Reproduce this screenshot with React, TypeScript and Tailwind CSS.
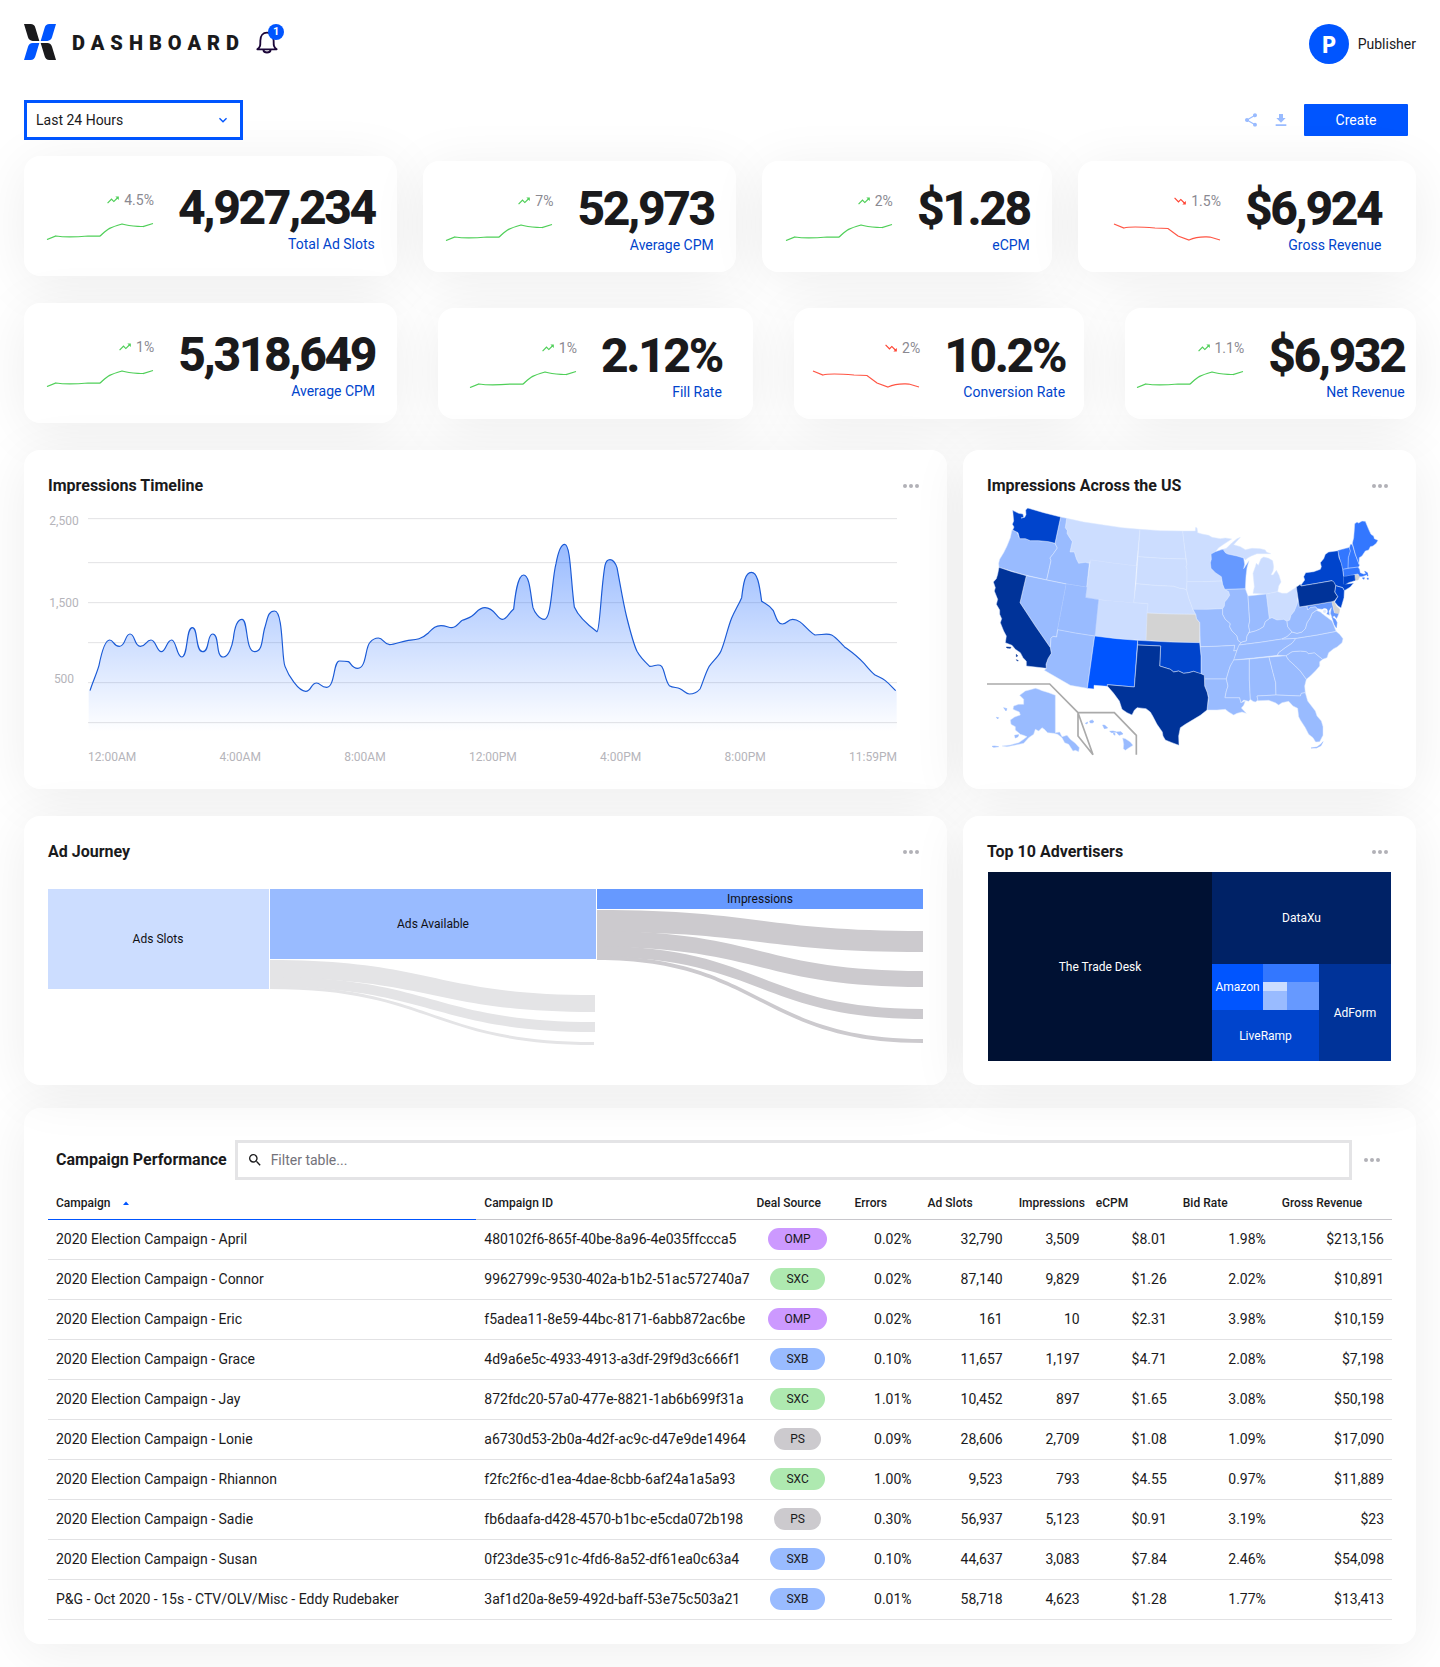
import type { ReactNode } from "react";
import { MdKeyboardArrowDown, MdSearch, MdShare, MdTrendingDown, MdTrendingUp } from "react-icons/md";

type Kpi = { value: string; label: string; change: string; down?: boolean; large?: boolean };

const topKpis: Kpi[] = [
  { value: "4,927,234", label: "Total Ad Slots", change: "4.5%", large: true },
  { value: "52,973", label: "Average CPM", change: "7%" },
  { value: "$1.28", label: "eCPM", change: "2%" },
  { value: "$6,924", label: "Gross Revenue", change: "1.5%", down: true },
];

const bottomKpis: Kpi[] = [
  { value: "5,318,649", label: "Average CPM", change: "1%", large: true },
  { value: "2.12%", label: "Fill Rate", change: "1%" },
  { value: "10.2%", label: "Conversion Rate", change: "2%", down: true },
  { value: "$6,932", label: "Net Revenue", change: "1.1%" },
];

const columns = [
  { name: "Campaign", width: "w-[428px]" },
  { name: "Campaign ID", width: "w-[272px]" },
  { name: "Deal Source", width: "w-[98px]" },
  { name: "Errors", width: "w-[73px]" },
  { name: "Ad Slots", width: "w-[91px]" },
  { name: "Impressions", width: "w-[77px]" },
  { name: "eCPM", width: "w-[87px]" },
  { name: "Bid Rate", width: "w-[99px]" },
  { name: "Gross Revenue", width: "w-[118px]" },
];

const campaigns = [
  ["2020 Election Campaign - April", "480102f6-865f-40be-8a96-4e035ffccca5", "OMP", "0.02%", "32,790", "3,509", "$8.01", "1.98%", "$213,156"],
  ["2020 Election Campaign - Connor", "9962799c-9530-402a-b1b2-51ac572740a7", "SXC", "0.02%", "87,140", "9,829", "$1.26", "2.02%", "$10,891"],
  ["2020 Election Campaign - Eric", "f5adea11-8e59-44bc-8171-6abb872ac6be", "OMP", "0.02%", "161", "10", "$2.31", "3.98%", "$10,159"],
  ["2020 Election Campaign - Grace", "4d9a6e5c-4933-4913-a3df-29f9d3c666f1", "SXB", "0.10%", "11,657", "1,197", "$4.71", "2.08%", "$7,198"],
  ["2020 Election Campaign - Jay", "872fdc20-57a0-477e-8821-1ab6b699f31a", "SXC", "1.01%", "10,452", "897", "$1.65", "3.08%", "$50,198"],
  ["2020 Election Campaign - Lonie", "a6730d53-2b0a-4d2f-ac9c-d47e9de14964", "PS", "0.09%", "28,606", "2,709", "$1.08", "1.09%", "$17,090"],
  ["2020 Election Campaign - Rhiannon", "f2fc2f6c-d1ea-4dae-8cbb-6af24a1a5a93", "SXC", "1.00%", "9,523", "793", "$4.55", "0.97%", "$11,889"],
  ["2020 Election Campaign - Sadie", "fb6daafa-d428-4570-b1bc-e5cda072b198", "PS", "0.30%", "56,937", "5,123", "$0.91", "3.19%", "$23"],
  ["2020 Election Campaign - Susan", "0f23de35-c91c-4fd6-8a52-df61ea0c63a4", "SXB", "0.10%", "44,637", "3,083", "$7.84", "2.46%", "$54,098"],
  ["P&G - Oct 2020 - 15s - CTV/OLV/Misc - Eddy Rudebaker", "3af1d20a-8e59-492d-baff-53e75c503a21", "SXB", "0.01%", "58,718", "4,623", "$1.28", "1.77%", "$13,413"],
];

const badgeColors: Record<string, string> = {
  OMP: "bg-[#cc99ff]",
  SXC: "bg-[#aee9b0]",
  SXB: "bg-[#99bbff]",
  PS: "bg-[#cccace]",
};

const shadow = "rounded-2xl bg-white shadow-[0_8px_56px_rgba(0,0,0,0.07)]";

function Logo() {
  return (
    <svg viewBox="72 72 96 108" className="h-9 w-8" aria-hidden="true">
      <path fill="#1a1a1c" d="M72 72H92Q103 72 106 83L118 123H98Q87 122 84 112Z" />
      <path fill="#0055ff" d="M168 72H148Q137 72 134 83L122 123H142Q153 122 156 112Z" />
      <path fill="#0055ff" d="M72 180H92Q103 180 106 169L118 129H98Q87 130 84 140Z" />
      <path fill="#1a1a1c" d="M168 180H148Q137 180 134 169L122 129H142Q153 130 156 140Z" />
    </svg>
  );
}

function Bell() {
  return (
    <button type="button" aria-label="Notifications, 1 new" className="relative ml-[11px] flex h-9 w-7 items-start pt-[7px]">
      <svg viewBox="768 92 66 69" className="h-[23px] w-[22px]" fill="none" stroke="#1b0638" strokeWidth="5.5">
        <path strokeLinejoin="round" d="M772 147C782 140 781 133 781 121C781 106 789 97 801 97C813 97 821 106 821 121C821 133 820 140 830 147Z" />
        <path d="M790 149C792 159 810 159 812 149" />
      </svg>
      <span className="absolute top-0 left-3 flex size-4 items-center justify-center rounded-full bg-[#0055ff] text-[11px] font-bold text-white">
        1
      </span>
    </button>
  );
}

function MoreButton({ label }: { label: string }) {
  return (
    <button type="button" aria-label={label} className="flex h-6 w-6 items-center justify-center">
      <svg viewBox="0 0 16 4" className="h-1 w-4" fill="#b2b1b7">
        <circle cx="2" cy="2" r="2" />
        <circle cx="8" cy="2" r="2" />
        <circle cx="14" cy="2" r="2" />
      </svg>
    </button>
  );
}

function Panel({ title, children }: { title: string; children: ReactNode }) {
  return (
    <section className={`${shadow} p-6`}>
      <header className="flex items-center justify-between">
        <h2 className="text-base leading-6 font-bold">{title}</h2>
        <MoreButton label={`${title} options`} />
      </header>
      {children}
    </section>
  );
}

function KpiCard({ value, label, change, down, large }: Kpi) {
  const Trend = down ? MdTrendingDown : MdTrendingUp;
  return (
    <article className={`flex items-start justify-center gap-6 ${shadow} ${large ? "pt-[26px] pb-[22px]" : "pt-[22px] pb-[17px]"}`}>
      <div className="mt-2 flex flex-col items-end gap-3">
        <p className="flex items-center gap-1 text-sm leading-5 text-[#8a8991]">
          <Trend className={`size-[14px] ${down ? "text-[#ff4433]" : "text-[#4fcf58]"}`} aria-hidden="true" />
          {change}
        </p>
        <svg
          viewBox="0 0 108 18"
          className={`h-[18px] w-[108px] ${down ? "text-[#ff5544]" : "text-[#4fcf58]"}`}
          fill="none"
          stroke="currentColor"
          strokeWidth="1.25"
          aria-hidden="true"
        >
          {down ? (
            <path d="M1 1L11 5C18 3 30 4 42 5L55 5.500L65 13L76 17C85 13 90 14 97 14L107 17" />
          ) : (
            <path d="M1 17.500L10 14C20 15.500 30 15 42 14L54 14C62 7 62 6 76 2C84 4.500 90 4 97 4.500L107 1.500" />
          )}
        </svg>
      </div>
      <div className="flex flex-col items-end">
        <strong className="text-5xl leading-[52px] font-extrabold tracking-tighter">{value}</strong>
        <span className="text-sm leading-5 text-[#0044cc]">{label}</span>
      </div>
    </article>
  );
}

const curve =
  "C278 755 290 730 297 705C304 670 315 629 329 629C341 629 340 648 358 648C378 648 374 611 390 611C406 611 402 648 421 648C438 648 438 629 453 629C468 629 470 664 484 664C498 664 500 629 515 629C529 629 530 680 545 680C565 680 557 592 577 592C595 592 585 664 608 664C630 664 620 611 638 611C660 611 645 680 670 680C685 680 696 650 700 625C705 580 715 567 726 567C745 567 735 664 764 664C790 664 785 620 795 590C803 565 803 542 824 542C850 542 845 690 855 708C865 735 895 783 917 783C935 783 932 758 950 758C962 758 962 771 980 771C1005 771 1000 692 1018 692C1028 692 1036 692 1045 694C1053 697 1055 714 1073 714C1100 714 1095 650 1110 636C1116 629 1122 623 1135 623C1150 623 1152 643 1169 643C1185 643 1200 634 1225 630C1245 628 1262 629 1285 608C1300 593 1306 586 1323 586C1340 586 1343 592 1356 592C1370 592 1378 575 1387 570C1396 566 1406 564 1415 558C1430 548 1435 532 1455 532C1485 532 1490 567 1508 567C1520 567 1525 550 1541 536C1545 500 1552 434 1571 434C1590 434 1592 500 1599 532C1603 545 1618 567 1633 567C1655 567 1655 450 1668 400C1675 362 1685 342 1694 342C1712 342 1712 450 1723 530C1735 558 1765 585 1791 604C1800 600 1803 470 1815 405C1818 392 1825 388 1830 388C1838 388 1845 395 1851 412C1862 470 1870 520 1880 560C1890 600 1900 640 1911 663C1920 680 1935 695 1949 708C1965 708 1975 698 1985 708C1995 722 1995 750 2008 766C2020 773 2030 770 2040 775C2055 783 2058 791 2068 791C2080 791 2090 788 2100 776C2108 760 2115 730 2127 709C2140 690 2155 680 2163 662C2175 635 2182 595 2195 563C2205 540 2215 525 2225 502C2230 460 2235 426 2254 426C2272 426 2278 460 2285 513C2300 523 2310 525 2320 541C2328 560 2332 581 2347 581C2362 581 2362 567 2378 567C2405 567 2420 600 2445 614C2465 614 2480 608 2495 614C2510 622 2520 637 2533 649C2555 665 2570 675 2590 697C2600 708 2610 722 2624 733C2635 740 2645 742 2655 750C2668 760 2676 770 2687 781";

function Timeline() {
  return (
    <div className="mt-[15px] flex pr-[26px] text-xs leading-4 text-[#b5b4ba]">
      <div className="w-10 shrink-0">
        <div className="w-8 text-center">
          <p>2,500</p>
          <p className="mt-[66px]">1,500</p>
          <p className="mt-[60px]">500</p>
        </div>
      </div>
      <div className="mt-[5px] grow">
        <svg
          viewBox="264 263 2427 642"
          preserveAspectRatio="none"
          className="h-[214px] w-full"
          role="img"
          aria-label="Impressions over the day"
        >
          <defs>
            <linearGradient id="area" x1="0" y1="342" x2="0" y2="905" gradientUnits="userSpaceOnUse">
              <stop offset="0" stopColor="#0055ff" stopOpacity="0.4" />
              <stop offset="1" stopColor="#0055ff" stopOpacity="0" />
            </linearGradient>
          </defs>
          <path stroke="#e2e2e4" strokeWidth="3" d="M264 265H2691M264 397H2691M264 517H2691M264 637H2691M264 757H2691M264 877H2691" />
          <path fill="url(#area)" d={`M266 905V781H270${curve}H2690V905Z`} />
          <path fill="none" stroke="#1a5ad6" strokeWidth="3.500" d={`M270 781${curve}`} />
        </svg>
        <div className="mt-[17px] flex justify-between">
          {["12:00AM", "4:00AM", "8:00AM", "12:00PM", "4:00PM", "8:00PM", "11:59PM"].map((time) => (
            <span key={time}>{time}</span>
          ))}
        </div>
      </div>
    </div>
  );
}

const stateShapes: { fill: string; shapes: string[] }[] = [
  {
    fill: "#ccddff",
    shapes: [
      "289,87 340,98 400,107 455,115 509,120 498,230 430,222 361,212 357,222 345,219 325,222 318,208 312,188 299,188 306,157 296,142 290,132 291,124 285,115",
      "361,212 430,222 498,230 490,340 420,334 345,325",
      "384,331 460,338 533,343 527,453 450,448 373,440",
      "509,120 570,124 637,125 640,150 643,175 647,209 575,207 503,202",
      "503,202 575,207 647,209 650,225 647,232 650,240 650,277 649,302 640,298 628,297 610,291 550,288 497,283",
      "497,283 550,288 610,291 628,297 640,298 649,302 655,325 661,342 668,362 676,375 600,374 530,371 533,343 490,340",
      "637,125 675,125 676,114 680,116 682,130 695,134 715,138 725,144 750,148 765,146 784,149 760,165 745,175 735,187 723,194 722,210 720,220 722,237 735,250 753,262 754,275 700,277 650,277 650,240 647,232 650,225 643,175 640,150",
      "650,277 700,277 754,275 757,285 763,300 775,307 778,318 770,330 763,338 762,350 758,358 710,360 668,362 661,342 655,325 649,302",
      "750,182 768,177 785,160 800,148 810,144 800,155 790,166 810,172 825,181 845,177 870,178 885,182 888,188 901,193 875,193 860,193 843,200 832,206 825,212 820,205 800,200 772,194",
      "848,312 852,292 850,272 848,252 855,232 858,222 864,228 872,208 880,203 895,207 907,214 910,232 908,245 902,256 908,257 918,243 926,258 932,278 925,290 922,307 888,314",
      "888,314 922,307 935,312 950,312 965,302 979,293 982,320 980,345 972,365 962,378 958,392 950,396 940,390 920,392 905,385 897,388",
    ],
  },
  {
    fill: "#99bbff",
    shapes: [
      "125,122 140,128 148,148 165,148 180,154 205,154 235,157 254,162 261,176 250,192 239,206 242,214 229,272 160,256 86,234 85,222 88,210 100,190 110,170 120,145",
      "271,83 289,87 285,115 291,124 290,132 296,142 306,157 299,188 312,188 318,208 325,222 345,219 357,222 349,294 288,284 229,272 242,214 239,206 250,192 261,176 254,162",
      "168,259 229,272 288,284 262,421 259,443 248,441 242,447 240,475 195,410 149,340",
      "288,284 349,294 345,325 384,331 373,440 315,431 262,421",
      "262,421 315,431 373,440 351,597 300,588 222,543 228,537 227,525 233,508 243,492 240,475 242,447 248,441 259,443",
      "668,360 710,360 757,358 757,375 765,390 780,403 778,412 785,425 800,440 803,453 812,460 808,466 800,483 790,485 793,468 740,471 690,472 688,400 678,388 676,375",
      "690,472 740,471 793,468 790,485 800,483 791,512 780,530 775,545 768,569 703,569 700,557 692,553 692,500",
      "703,569 768,569 773,590 768,605 764,625 808,625 812,640 825,635 820,648 813,656 828,672 815,668 800,672 790,677 775,668 765,660 740,662 710,662 715,625 711,610 703,590",
      "763,300 825,298 833,320 838,395 835,410 838,425 830,440 828,455 818,457 812,460 803,453 800,440 785,425 778,412 780,403 765,390 757,375 757,358 762,350 763,338 770,330 778,318 775,307",
      "833,320 888,314 897,388 885,397 880,412 867,420 855,425 836,430 838,425 835,410 838,395",
      "828,455 830,440 836,430 855,425 867,420 880,412 885,397 897,388 905,385 920,392 940,390 950,396 952,412 965,428 950,442 935,449 870,459 806,467 812,460 818,457",
      "806,467 870,459 935,449 977,447 965,462 945,475 925,490 921,498 850,506 790,512 800,483",
      "790,512 837,509 837,570 840,630 835,636 820,632 812,640 808,625 764,625 768,605 773,590 768,569 775,545 780,530",
      "837,509 896,503 908,550 916,580 917,617 860,620 863,632 855,638 848,636 840,630 837,570",
      "896,503 947,499 955,512 975,530 990,545 1008,570 1003,590 1005,610 993,612 990,620 917,617 916,580 908,550",
      "860,620 917,617 990,620 993,612 1005,610 1012,635 1035,665 1040,680 1053,695 1058,712 1058,738 1048,757 1036,758 1028,745 1015,735 1005,715 990,692 985,682 982,657 968,650 955,636 935,640 925,647 915,640 895,633 863,634",
      "947,499 965,487 990,485 1008,487 1015,493 1032,490 1057,510 1048,517 1048,530 1035,545 1020,560 1008,570 990,545 975,530 955,512",
      "921,498 925,490 945,475 965,462 977,447 1040,437 1097,426 1108,435 1118,448 1115,460 1100,473 1090,478 1075,490 1070,505 1057,510 1032,490 1015,493 1008,487 990,485 965,487 947,499",
      "935,449 950,442 965,428 980,432 995,428 1005,418 1010,400 1020,385 1025,372 1038,363 1050,368 1062,378 1072,385 1085,395 1092,412 1097,426 1040,437 977,447",
      "958,392 962,378 972,365 980,345 984,330 987,353 1010,350 1012,362 1020,354 1035,352 1042,360 1038,363 1025,372 1020,385 1010,400 1005,418 995,428 980,432 965,428 952,412 950,396",
      "195,597 205,600 215,604 235,610 255,618 255,730 268,728 275,742 290,738 300,750 315,762 327,775 325,787 315,783 308,785 295,765 283,760 275,745 262,735 250,732 232,730 222,720 215,715 205,725 195,720 190,735 175,745 160,762 140,766 110,772 95,770 120,767 145,760 160,750 170,742 160,738 150,735 135,722 135,712 122,705 120,692 133,683 150,677 147,668 128,660 130,650 145,645 160,645 160,630 148,618 165,605 180,601",
      "100,655 110,658 107,665", "78,684 85,685 82,689", "133,738 145,736 143,742 135,746", "65,771 72,770 85,772 70,774",
      "345,702 352,698 350,704", "358,695 366,692 371,697 366,701 359,700", "397,707 404,708 412,716 402,718", "418,726 428,725 438,728 424,730", "428,733 434,732 434,738", "438,728 452,727 458,734 446,738",
      "457,746 465,748 480,758 488,768 475,776 465,783 459,778 460,765",
      "1022,776 1040,773 1052,764 1058,757 1052,769 1038,776",
    ],
  },
  {
    fill: "#6699ff",
    shapes: [
      "722,194 735,187 750,182 758,180 765,190 772,194 800,200 820,206 823,225 820,238 832,220 836,214 830,235 827,260 825,298 763,300 757,285 753,262 735,250 722,237 720,220 723,210",
      "1010,350 1050,343 1085,337 1092,370 1106,372 1102,382 1098,388 1092,380 1085,385 1080,372 1083,355 1076,365 1078,378 1068,374 1055,360 1042,358 1035,352 1020,354 1012,362",
      "1085,383 1095,390 1100,400 1098,415 1092,405",
    ],
  },
  { fill: "#d3d3d3", shapes: ["530,371 600,374 676,375 678,388 688,400 688,460 600,458 527,453", "1085,337 1090,335 1098,350 1108,360 1106,372 1094,371", "1152,258 1163,254 1168,262 1163,272 1154,273"] },
  {
    fill: "#3377ff",
    shapes: [
      "1103,184 1137,175 1140,185 1134,205 1133,237 1117,240",
      "1137,175 1140,165 1146,165 1155,195 1163,215 1168,228 1163,235 1133,237 1134,205 1140,185",
      "1146,162 1150,145 1152,120 1153,103 1160,98 1165,101 1175,95 1185,96 1195,120 1202,135 1210,140 1212,148 1223,153 1218,162 1208,170 1200,172 1195,182 1185,185 1175,200 1167,205 1166,225 1155,195",
      "1117,240 1133,237 1163,233 1168,240 1170,250 1180,254 1190,252 1188,258 1175,262 1168,262 1163,254 1120,262",
      "1183,246 1191,250 1193,260 1190,258", "1176,266 1182,265 1181,270", "1190,267 1194,266 1193,271",
    ],
  },
  { fill: "#0055ff", shapes: ["373,440 440,448 502,453 492,593 411,586 412,591 371,588 371,599 351,597"] },
  {
    fill: "#0044cc",
    shapes: [
      "127,63 145,72 158,74 160,84 152,86 163,84 167,76 166,62 172,56 220,70 271,83 254,162 235,157 205,154 180,154 165,148 148,148 143,130 127,122 131,113 126,105 130,95",
      "502,453 600,458 688,460 692,500 692,555 670,546 655,550 640,552 625,545 610,548 600,540 568,530 571,470 502,467",
      "992,287 1003,272 1000,262 1006,250 1030,247 1050,240 1053,232 1050,220 1060,208 1065,195 1075,188 1103,184 1106,205 1113,222 1117,240 1120,262 1121,285 1135,283 1150,281 1140,293 1122,304 1117,295 1096,289 1085,274 1040,282 992,290",
      "1096,289 1117,295 1122,304 1121,325 1112,356 1103,350 1093,338 1102,322 1093,308",
      "1120,262 1152,257 1154,273 1135,279 1121,288",
    ],
  },
  {
    fill: "#003399",
    shapes: [
      "86,234 125,247 168,259 149,340 195,410 240,475 243,492 233,508 227,525 228,537 168,530 168,516 158,505 150,490 135,480 125,468 105,460 108,440 100,425 90,400 94,388 88,375 88,362 78,345 82,330 72,305 75,295 69,278 78,268 82,255",
      "502,467 571,470 568,530 600,540 610,548 625,545 640,552 655,550 670,546 692,553 702,558 703,590 711,610 714,625 710,662 690,678 670,690 645,705 630,715 625,740 626,768 605,760 585,752 578,740 576,728 560,705 547,680 540,668 527,658 500,655 492,663 485,677 470,670 455,660 447,635 430,612 411,590 411,586 492,593",
      "978,293 990,285 992,290 1040,282 1085,274 1091,278 1096,289 1093,308 1102,322 1093,334 1085,337 1050,343 987,353",
      "108,473 122,474 120,477 110,476", "138,495 142,500 138,502", "138,511 144,514 141,515",
    ],
  },
];

function UsMap() {
  return (
    <svg viewBox="50 50 1215 756" className="mt-2 h-auto w-full" role="img" aria-label="Map of impressions by state">
      {stateShapes.map(({ fill, shapes }) => (
        <g key={fill} fill={fill} stroke="#dde8ff" strokeWidth="1.500" strokeLinejoin="round">
          {shapes.map((points) => (
            <polygon key={points} points={points} stroke={points.length < 60 ? fill : undefined} />
          ))}
        </g>
      ))}
      <circle cx="1063" cy="366" r="7" fill="#dde8ff" stroke="#ffffff" strokeWidth="4" />
      <path fill="none" stroke="#aaaaaa" strokeWidth="5" d="M50 584H238L323 670H432L498 738V796M323 670V740L368 796Z" />
    </svg>
  );
}

function flow(x1: number, x2: number, top: number, bottom: number, endTop: number, endBottom: number) {
  const mid = (x1 + x2) / 2;
  return `M${x1} ${top}C${mid} ${top} ${mid} ${endTop} ${x2} ${endTop}V${endBottom}C${mid} ${endBottom} ${mid} ${bottom} ${x1} ${bottom}Z`;
}

function Journey() {
  return (
    <svg viewBox="0 0 875 160" className="mt-[25px] h-auto w-full text-xs" role="img" aria-label="Ad journey from slots to impressions">
      <g fill="#e4e4e6">
        <path d={flow(222, 547, 71, 89, 106, 123)} />
        <path d={flow(222, 547, 88, 98, 133, 143)} />
        <path d={flow(222, 546, 97, 100, 153, 156)} />
      </g>
      <g fill="#cccace">
        <path d={flow(549, 875, 21, 43, 42, 63)} />
        <path d={flow(549, 875, 42, 58, 82, 98)} />
        <path d={flow(549, 875, 57, 68, 120, 130)} />
        <path d={flow(549, 875, 67, 71, 150, 154)} />
      </g>
      <rect width="221" height="100" fill="#ccddff" />
      <rect x="222" width="326" height="70" fill="#99bbff" />
      <rect x="549" width="326" height="20" fill="#6699ff" />
      <g fill="#101014" textAnchor="middle">
        <text x="110" y="54">Ads Slots</text>
        <text x="385" y="39">Ads Available</text>
        <text x="712" y="14">Impressions</text>
      </g>
    </svg>
  );
}

function Treemap() {
  const cell = "flex items-center justify-center";
  return (
    <div className="mt-2 grid h-[189px] w-full grid-cols-[224fr_179fr] pr-px pl-px text-xs text-white">
      <div className={`${cell} bg-[#001133]`}>The Trade Desk</div>
      <div className="grid grid-rows-[92fr_97fr]">
        <div className={`${cell} bg-[#002266]`}>DataXu</div>
        <div className="grid grid-cols-[107fr_72fr]">
          <div className="grid grid-rows-[46fr_51fr]">
            <div className="grid grid-cols-[51fr_56fr]">
              <div className={`${cell} bg-[#0055ff]`}>Amazon</div>
              <div className="grid grid-rows-[18fr_28fr]">
                <div className="bg-[#3377ff]" />
                <div className="grid grid-cols-[24fr_32fr]">
                  <div className="grid grid-rows-[9fr_19fr]">
                    <div className="bg-[#ccddff]" />
                    <div className="bg-[#99bbff]" />
                  </div>
                  <div className="bg-[#6699ff]" />
                </div>
              </div>
            </div>
            <div className={`${cell} bg-[#0044cc]`}>LiveRamp</div>
          </div>
          <div className={`${cell} bg-[#003399]`}>AdForm</div>
        </div>
      </div>
    </div>
  );
}

function CampaignTable() {
  return (
    <table className="mt-2 w-full table-fixed border-collapse text-sm leading-5">
      <thead>
        <tr className="h-[31px] border-b border-[#c8c7cc] text-left text-xs">
          {columns.map(({ name, width }, i) => (
            <th
              key={name}
              scope="col"
              aria-sort={i === 0 ? "ascending" : undefined}
              className={`${width} px-2 font-medium whitespace-nowrap ${i === 0 ? "border-b border-[#0055ff]" : ""}`}
            >
              {i === 0 ? (
                <button type="button" className="flex items-center gap-3">
                  {name}
                  <svg viewBox="0 0 6 4" className="h-1 w-[6px]" fill="#0055ff" aria-hidden="true">
                    <path d="M3 0.500L6 4H0Z" />
                  </svg>
                </button>
              ) : (
                name
              )}
            </th>
          ))}
        </tr>
      </thead>
      <tbody>
        {campaigns.map((row) => (
          <tr key={row[1]} className="h-10 border-b border-[#e2e2e4]">
            {row.map((cell, i) => (
              <td key={columns[i].name} className={`px-2 whitespace-nowrap ${i > 2 ? "text-right" : i === 2 ? "text-center" : ""}`}>
                {i === 2 ? (
                  <span className={`inline-block rounded-full px-4 align-middle text-xs leading-[22px] ${badgeColors[cell]}`}>{cell}</span>
                ) : (
                  cell
                )}
              </td>
            ))}
          </tr>
        ))}
      </tbody>
    </table>
  );
}

export default function App() {
  return (
    <main className="min-h-screen bg-white p-6 font-[Roboto,sans-serif] text-[#1a1a1c]">
      <header className="flex items-start justify-between">
        <div className="flex items-start">
          <Logo />
          <h1 className="ml-4 text-xl leading-[38px] font-black tracking-[0.3em]">DASHBOARD</h1>
          <Bell />
        </div>
        <div className="flex items-center gap-[9px] text-sm">
          <span className="flex size-10 items-center justify-center rounded-full bg-[#0055ff] font-['Open_Sans',sans-serif] text-2xl font-bold text-white">
            P
          </span>
          Publisher
        </div>
      </header>

      <div className="mt-9 flex items-center justify-between">
        <div className="relative w-[219px]">
          <select
            aria-label="Time range"
            className="block h-10 w-full appearance-none border-3 border-[#0055ff] bg-white px-[9px] text-sm"
          >
            <option>Last 24 Hours</option>
          </select>
          <MdKeyboardArrowDown className="pointer-events-none absolute top-3 right-3 size-4 text-[#0055ff]" aria-hidden="true" />
        </div>
        <div className="flex items-center pr-2 text-[#99bbff]">
          <button type="button" aria-label="Share">
            <MdShare className="size-4" />
          </button>
          <button type="button" aria-label="Download" className="ml-[14px]">
            <svg viewBox="0 0 24 24" className="size-4" fill="currentColor">
              <path d="M19 9h-4V3H9v6H5l7 7 7-7zM4 18.500v2.500h16v-2.500H4z" />
            </svg>
          </button>
          <button type="button" className="ml-[15px] h-8 w-[104px] rounded-[1px] bg-[#0055ff] text-sm text-white">
            Create
          </button>
        </div>
      </div>

      <div className="mt-4 grid grid-cols-[373fr_314fr_290fr_338fr] items-center gap-[26px]">
        {topKpis.map((kpi) => (
          <KpiCard key={kpi.value} {...kpi} />
        ))}
      </div>
      <div className="mt-[27px] grid grid-cols-[373fr_314fr_290fr_291fr] items-center gap-[41px]">
        {bottomKpis.map((kpi) => (
          <KpiCard key={kpi.value} {...kpi} />
        ))}
      </div>

      <div className="mt-[27px] grid grid-cols-[923fr_453fr] gap-x-4 gap-y-[27px]">
        <Panel title="Impressions Timeline">
          <Timeline />
        </Panel>
        <Panel title="Impressions Across the US">
          <UsMap />
        </Panel>
        <Panel title="Ad Journey">
          <Journey />
        </Panel>
        <Panel title="Top 10 Advertisers">
          <Treemap />
        </Panel>
      </div>

      <section className={`mt-[23px] ${shadow} px-6 pt-8 pb-6`}>
        <div className="flex items-center pr-2 pl-2">
          <h2 className="text-base leading-6 font-bold">Campaign Performance</h2>
          <label className="ml-2 flex h-10 grow items-center gap-2 border-3 border-[#e4e4e6] px-[9px]">
            <MdSearch className="size-4" aria-hidden="true" />
            <input
              type="text"
              aria-label="Filter table"
              placeholder="Filter table..."
              className="grow bg-transparent text-sm outline-none placeholder:text-[#73727a]"
            />
          </label>
          <div className="ml-2">
            <MoreButton label="Campaign Performance options" />
          </div>
        </div>
        <CampaignTable />
      </section>
    </main>
  );
}
